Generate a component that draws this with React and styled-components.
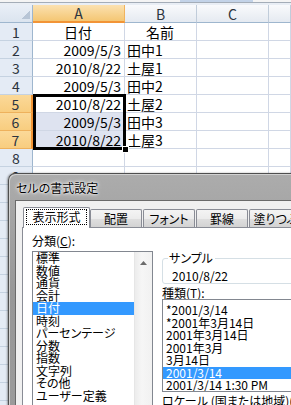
import React from "react";
import styled, { createGlobalStyle, css } from "styled-components";

const GlobalStyle = createGlobalStyle`
  html, body { margin: 0; padding: 0; background: #fff; }
  body {
    width: 291px;
    height: 405px;
    overflow: hidden;
    font-family: "Noto Sans CJK JP", sans-serif;
    font-feature-settings: "palt";
  }
`;

const Screen = styled.div`
  position: relative;
  width: 291px;
  height: 405px;
  overflow: hidden;
  background: #fff;
`;

const TopStrip = styled.div`
  height: 5px;
  background:
    linear-gradient(#c3d3e8, #c3d3e8) 180px 0 / 73px 2px no-repeat,
    linear-gradient(#f4f4f4 0 2px, #a4adb8 2px 3px, #e9eef5 3px 5px);
`;

const Sheet = styled.div`
  position: relative;
  display: grid;
  grid-template-columns: 33px 92px 72px 72px 1fr;
  grid-auto-rows: 18px;
  font-size: 14px;
  color: #000;
`;

const Corner = styled.div`
  box-sizing: border-box;
  border-right: 1px solid #9eb6ce;
  border-bottom: 1px solid #9eb6ce;
  background:
    linear-gradient(to bottom right, transparent 50%, #b7c5d6 50%) right 2px bottom 3px / 9px 9px no-repeat,
    linear-gradient(#e9eff7, #dbe4ef);
`;

const ColHead = styled.div`
  box-sizing: border-box;
  display: flex;
  align-items: center;
  justify-content: center;
  font-size: 14px;
  color: #2c3440;
  border-right: 1px solid #c0ccda;
  border-bottom: 1px solid #9eb6ce;
  background: linear-gradient(#f9fafc, #e5eaf1);
  ${(p) =>
    p.$active &&
    css`
      background: linear-gradient(#fbe1b0, #f4c673);
      border-right-color: #f0b35e;
      border-bottom: 2px solid #f29436;
    `}
`;

const RowHead = styled.div`
  box-sizing: border-box;
  display: flex;
  align-items: center;
  justify-content: center;
  font-size: 14px;
  color: #2c3440;
  border-right: 1px solid #9eb6ce;
  border-bottom: 1px solid #c5d2e1;
  background: #e4ebf5;
  ${(p) =>
    p.$active &&
    css`
      background: linear-gradient(#fbd999, #f8cd7f);
      border-bottom-color: #eeb15c;
      border-right: 2px solid #f29436;
    `}
`;

const Cell = styled.div`
  box-sizing: border-box;
  display: flex;
  align-items: center;
  justify-content: ${(p) => p.$align || "flex-start"};
  padding: 0 3px 0 2px;
  white-space: nowrap;
  border-right: 1px solid #d0d7e5;
  border-bottom: 1px solid #d0d7e5;
  background: ${(p) => (p.$tint ? "#dee3f0" : "#fff")};
`;

const Selection = styled.div`
  position: absolute;
  left: 33px;
  top: 89px;
  width: 93px;
  height: 56px;
  box-sizing: border-box;
  border: 3px solid #000;
  pointer-events: none;
`;

const FillHandle = styled.div`
  position: absolute;
  right: -5px;
  bottom: -5px;
  width: 5px;
  height: 5px;
  background: #000;
  box-shadow: 0 0 0 1px #fff;
`;

const Dialog = styled.div`
  position: absolute;
  left: 8px;
  top: 173px;
  width: 420px;
  height: 300px;
  display: flex;
  flex-direction: column;
  border: 1px solid #4f4f4f;
  border-right: none;
  border-bottom: none;
  border-radius: 7px 0 0 0;
  background: linear-gradient(#acacac, #979797 40%, #9d9d9d);
  box-shadow: -1px 0 2px rgba(0, 0, 0, 0.35), inset 1px 1px 0 #d2d2d2;
`;

const TitleBar = styled.div`
  flex-shrink: 0;
  height: 26px;
  display: flex;
  align-items: center;
  padding-left: 7px;
  font-size: 12px;
  color: #000;
  text-shadow: 0 0 5px #fff, 0 0 3px #fff, 0 0 1px #fff;
`;

const Client = styled.div`
  flex: 1;
  min-height: 0;
  margin-left: 6px;
  background: #f0f0f0;
  border-top: 1px solid #6a6a6a;
  border-left: 1px solid #6a6a6a;
  padding: 6px 0 0 6px;
  display: flex;
  flex-direction: column;
`;

const TabStrip = styled.div`
  flex-shrink: 0;
  display: flex;
  align-items: flex-end;
  height: 21px;
  margin-bottom: -1px;
  position: relative;
  z-index: 1;
`;

const Tab = styled.div`
  flex-shrink: 0;
  box-sizing: border-box;
  display: flex;
  align-items: center;
  justify-content: center;
  white-space: nowrap;
  font-size: 12px;
  line-height: 12px;
  color: #000;
  border: 1px solid #898c95;
  border-bottom: none;
  border-radius: 2px 2px 0 0;
  width: ${(p) => p.$width || 52}px;
  height: 18px;
  margin: 0 1px 1px 0;
  background: linear-gradient(#f4f4f4, #ececec 50%, #dfdfdf 50%, #d3d3d3);
  ${(p) =>
    p.$active &&
    css`
      width: 67px;
      height: 21px;
      margin: 0 0 0 1px;
      background: #fff;
      padding-bottom: 2px;
    `}
`;

const Focus = styled.span`
  display: inline-block;
  box-sizing: border-box;
  width: 61px;
  height: 16px;
  line-height: 14px;
  text-align: center;
  border: 1px dotted #000;
`;

const Panel = styled.div`
  flex: 1;
  min-height: 0;
  overflow: hidden;
  display: flex;
  gap: 9px;
  background: #fff;
  border: 1px solid #898c95;
  padding: 0 0 0 9px;
  font-size: 12px;
  line-height: 12px;
  color: #000;
`;

const LeftCol = styled.div`
  flex-shrink: 0;
  width: 121px;
  display: flex;
  flex-direction: column;
`;

const RightCol = styled.div`
  flex-shrink: 0;
  width: 200px;
  display: flex;
  flex-direction: column;
  padding-top: 24px;
`;

const Label = styled.div`
  flex-shrink: 0;
  height: 12px;
  margin: ${(p) => p.$margin || "0"};
  white-space: nowrap;
`;

const ListBox = styled.div`
  flex-shrink: 0;
  box-sizing: border-box;
  display: flex;
  height: ${(p) => p.$height}px;
  overflow: hidden;
  border: 1px solid #828790;
  background: #fff;
  padding-top: ${(p) => p.$pad || 0}px;
`;

const Items = styled.div`
  flex: 1;
  display: flex;
  flex-direction: column;
`;

const Item = styled.div`
  flex-shrink: 0;
  height: 12.5px;
  line-height: 12.5px;
  padding-left: 3px;
  white-space: nowrap;
  background: ${(p) => (p.$selected ? "#3399ff" : "transparent")};
  color: ${(p) => (p.$selected ? "#fff" : "#000")};
`;

const ScrollBar = styled.div`
  width: 17px;
  background: linear-gradient(90deg, #ececec, #f6f6f6 40%, #f1f1f1);
  border-left: 1px solid #e6e6e6;
`;

const ScrollButton = styled.div`
  height: 17px;
  display: flex;
  align-items: center;
  justify-content: center;
  padding-top: 5px;
  box-sizing: border-box;
`;

const Group = styled.fieldset`
  flex-shrink: 0;
  margin: 0;
  padding: 0 0 1px 5px;
  border: 1px solid #d5dfe5;
  border-radius: 3px;
  min-width: 0;
`;

const Legend = styled.legend`
  padding: 0 2px 0 1px;
  line-height: 12px;
`;

const SampleValue = styled.div`
  margin: 6px 0 0 4px;
  height: 12px;
`;

const categories = [
  "標準",
  "数値",
  "通貨",
  "会計",
  "日付",
  "時刻",
  "パーセンテージ",
  "分数",
  "指数",
  "文字列",
  "その他",
  "ユーザー定義",
];

const types = [
  "*2001/3/14",
  "*2001年3月14日",
  "2001年3月14日",
  "2001年3月",
  "3月14日",
  "2001/3/14",
  "2001/3/14 1:30 PM",
];

const rows = [
  ["日付", "名前", true],
  ["2009/5/3", "田中1"],
  ["2010/8/22", "土屋1"],
  ["2009/5/3", "田中2"],
  ["2010/8/22", "土屋2"],
  ["2009/5/3", "田中3"],
  ["2010/8/22", "土屋3"],
];

const tabs = [
  { label: "表示形式" },
  { label: "配置" },
  { label: "フォント" },
  { label: "罫線" },
  { label: "塗りつぶし", width: 64 },
];

export default function App() {
  const allRows = [];
  for (let i = 0; i < 22; i++) allRows.push(rows[i] || ["", ""]);

  return (
    <Screen>
      <GlobalStyle />
      <TopStrip />
      <Sheet>
        <Corner />
        <ColHead $active>A</ColHead>
        <ColHead>B</ColHead>
        <ColHead>C</ColHead>
        <ColHead />
        {allRows.map(([a, b, head], i) => {
          const n = i + 1;
          const active = n >= 5 && n <= 7;
          return (
            <React.Fragment key={n}>
              <RowHead $active={active}>{n}</RowHead>
              <Cell $align={head ? "center" : "flex-end"} $tint={n === 6 || n === 7}>
                {a}
              </Cell>
              <Cell $align={head ? "center" : "flex-start"}>{b}</Cell>
              <Cell />
              <Cell />
            </React.Fragment>
          );
        })}
        <Selection>
          <FillHandle />
        </Selection>
      </Sheet>

      <Dialog>
        <TitleBar>セルの書式設定</TitleBar>
        <Client>
          <TabStrip>
            {tabs.map((t, i) =>
              i === 0 ? (
                <Tab key={t.label} $active>
                  <Focus>{t.label}</Focus>
                </Tab>
              ) : (
                <Tab key={t.label} $width={t.width}>
                  {t.label}
                </Tab>
              )
            )}
          </TabStrip>
          <Panel>
            <LeftCol>
              <Label $margin="7px 0 4px 0">
                分類(<u>C</u>):
              </Label>
              <ListBox $height={200}>
                <Items>
                  {categories.map((c, i) => (
                    <Item key={c} $selected={i === 4}>
                      {c}
                    </Item>
                  ))}
                </Items>
                <ScrollBar>
                  <ScrollButton>
                    <svg width="7" height="4" viewBox="0 0 7 4">
                      <path d="M0 4 L3.5 0 L7 4 Z" fill="#6b6b6b" />
                    </svg>
                  </ScrollButton>
                </ScrollBar>
              </ListBox>
            </LeftCol>
            <RightCol>
              <Group>
                <Legend>サンプル</Legend>
                <SampleValue>2010/8/22</SampleValue>
              </Group>
              <Label $margin="3px 0 0 0">
                種類(<u>T</u>):
              </Label>
              <ListBox $height={93} $pad={4}>
                <Items>
                  {types.map((t, i) => (
                    <Item key={t + i} $selected={i === 5}>
                      {t}
                    </Item>
                  ))}
                </Items>
              </ListBox>
              <Label $margin="3px 0 0 0">
                ロケール (国または地域)(<u>L</u>):
              </Label>
            </RightCol>
          </Panel>
        </Client>
      </Dialog>
    </Screen>
  );
}
